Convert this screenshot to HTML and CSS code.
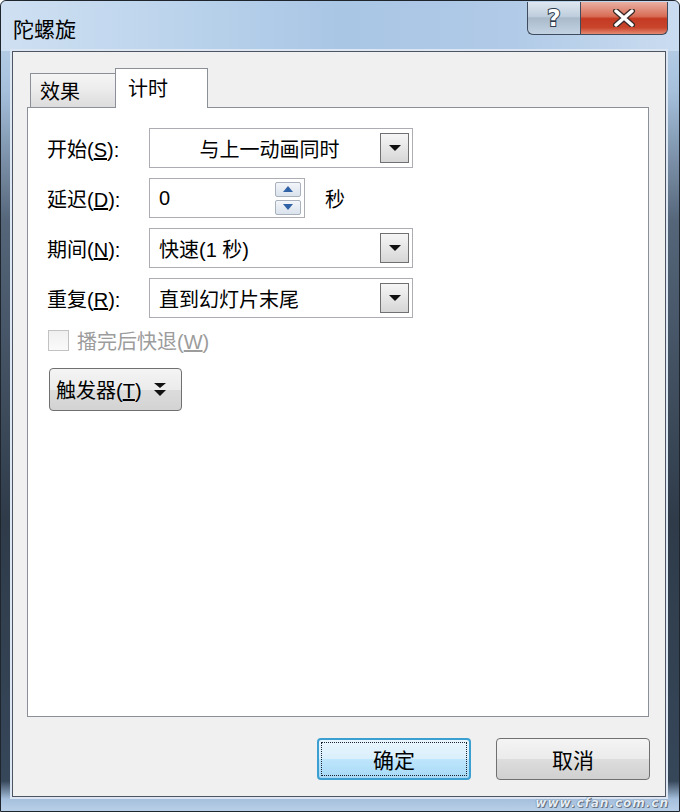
FILE: index.html
```html
<!DOCTYPE html>
<html lang="zh-CN">
<head>
    <meta charset="UTF-8">
    <meta name="viewport" content="width=device-width, initial-scale=1.0">
    <title>陀螺旋</title>
    <link rel="stylesheet" href="styles.css">
</head>
<body>
    <div class="window">
        <div class="titlebar">
            <span class="title">陀螺旋</span>
            <div class="caption">
                <button class="cap help">?</button>
                <button class="cap close">
                    <svg width="24" height="18" viewBox="0 0 24 18">
                        <path d="M4 2 L20 16 M20 2 L4 16" stroke="#3a2a28" stroke-width="6" stroke-linecap="round"/>
                        <path d="M4 2 L20 16 M20 2 L4 16" stroke="#fff" stroke-width="3.4" stroke-linecap="round"/>
                    </svg>
                </button>
            </div>
        </div>

        <div class="client">
            <div class="tabs">
                <div class="tab">效果</div>
                <div class="tab active">计时</div>
            </div>

            <div class="panel">
                <div class="row">
                    <label class="lbl">开始(<u>S</u>):</label>
                    <div class="combo center">
                        <span class="value">与上一动画同时</span>
                        <span class="drop"></span>
                    </div>
                </div>
                <div class="row">
                    <label class="lbl">延迟(<u>D</u>):</label>
                    <div class="spinbox">
                        <span class="value">0</span>
                        <div class="spin">
                            <span class="spin-btn">
                                <svg width="10" height="6" viewBox="0 0 10 6"><polygon points="0,6 10,6 5,0" fill="#2f63a6"/></svg>
                            </span>
                            <span class="spin-btn">
                                <svg width="10" height="6" viewBox="0 0 10 6"><polygon points="0,0 10,0 5,6" fill="#2f63a6"/></svg>
                            </span>
                        </div>
                    </div>
                    <span class="unit">秒</span>
                </div>
                <div class="row">
                    <label class="lbl">期间(<u>N</u>):</label>
                    <div class="combo">
                        <span class="value">快速(1 秒)</span>
                        <span class="drop"></span>
                    </div>
                </div>
                <div class="row">
                    <label class="lbl">重复(<u>R</u>):</label>
                    <div class="combo">
                        <span class="value">直到幻灯片末尾</span>
                        <span class="drop"></span>
                    </div>
                </div>

                <div class="check-row">
                    <span class="checkbox"></span>
                    <span class="check-text">播完后快退(<u>W</u>)</span>
                </div>

                <button class="trigger">
                    <span>触发器(<u>T</u>)</span>
                    <svg width="12" height="15" viewBox="0 0 12 15">
                        <polygon points="0,1 12,1 6,6" fill="#111"/>
                        <polygon points="0,8 12,8 6,14" fill="#111"/>
                    </svg>
                </button>
            </div>

            <div class="actions">
                <button class="btn default"><span class="focus">确定</span></button>
                <button class="btn">取消</button>
            </div>
        </div>

        <span class="watermark">www.cfan.com.cn</span>
    </div>
</body>
</html>
```

FILE: styles.css
```css
* {
    box-sizing: border-box;
}
body {
    margin: 0;
    width: 680px;
    height: 812px;
    font-family: "Liberation Sans", "Noto Sans CJK SC", sans-serif;
    font-size: 20px;
    color: #000;
}
.window {
    position: relative;
    width: 680px;
    height: 812px;
    display: flex;
    flex-direction: column;
    padding: 0 13px 14px 11px;
    border: 1px solid #1e252d;
    border-radius: 6px 6px 0 0;
    background: linear-gradient(to bottom, #c2d7ee 0, #a6c0dc 90px, #55667a 220px, #2f3b49 520px, #36475a 780px, #a5bfdc 798px, #bcd2ea 812px);
}

/* title bar */
.titlebar {
    height: 50px;
    margin: 0 -13px 0 -11px;
    padding: 0 11px 0 12px;
    display: flex;
    align-items: flex-start;
    justify-content: space-between;
    border-radius: 6px 6px 0 0;
    background: linear-gradient(to right, #cfe0f2 0%, #bcd4ec 25%, #a9c6e5 50%, #b0cae7 75%, #cadcf0 100%);
}
.title {
    font-family: "Noto Sans CJK SC", sans-serif;
    font-size: 21px;
    line-height: 54px;
}
.caption {
    display: flex;
    margin-top: 1px;
}
.cap {
    height: 33px;
    border: 1px solid #3f4c5e;
    border-top: none;
    padding: 0;
    display: flex;
    align-items: center;
    justify-content: center;
}
.help {
    width: 53px;
    border-right: none;
    border-radius: 0 0 0 6px;
    background: linear-gradient(to bottom, #dfe7f0 0%, #bfcedd 45%, #a9bacb 50%, #c3d3e3 100%);
    font-family: "DejaVu Sans", sans-serif;
    font-weight: bold;
    font-size: 23px;
    color: #fff;
    -webkit-text-stroke: 2px #2c3a4c;
    paint-order: stroke fill;
}
.close {
    width: 88px;
    border-radius: 0 0 6px 0;
    background: linear-gradient(to bottom, #eab0a2 0%, #d86c55 45%, #c43a22 52%, #c8452c 80%, #e58a72 100%);
}

/* client area */
.client {
    flex: 1;
    display: flex;
    flex-direction: column;
    padding: 16px 16px 0 14px;
    background: #f0f0f0;
    border: 1px solid #4c5561;
    box-shadow: 0 0 0 2px #dbe6f2;
}
.tabs {
    display: flex;
    align-items: flex-end;
    height: 39px;
    padding-left: 3px;
    position: relative;
    z-index: 1;
}
.tab {
    width: 85px;
    height: 34px;
    border: 1px solid #8a8f98;
    border-bottom: none;
    border-right: none;
    background: linear-gradient(to bottom, #f5f5f5 0%, #ebebeb 50%, #dcdcdc 100%);
    font-family: "Noto Sans CJK SC", sans-serif;
    padding-left: 9px;
    line-height: 34px;
}
.tab.active {
    width: 93px;
    height: 40px;
    margin-bottom: -1px;
    border-right: 1px solid #8a8f98;
    background: #fff;
    padding-left: 12px;
    line-height: 37px;
}
.panel {
    flex: 1;
    display: flex;
    flex-direction: column;
    align-items: flex-start;
    gap: 10px;
    padding: 20px 0 0 19px;
    background: #fff;
    border: 1px solid #8a8f98;
}
.row {
    display: flex;
    align-items: center;
    height: 40px;
}
.lbl {
    width: 102px;
}
.combo, .spinbox {
    height: 40px;
    display: flex;
    align-items: center;
    background: #fff;
    border: 1px solid #abadb3;
    padding: 0 3px 0 9px;
}
.combo {
    width: 264px;
}
.value {
    flex: 1;
}
.combo.center .value {
    text-align: center;
}
.drop {
    width: 29px;
    height: 30px;
    border: 1px solid #707070;
    background: linear-gradient(to bottom, #f6f6f6 0%, #e6e6e6 50%, #d6d6d6 100%);
    display: flex;
    align-items: center;
    justify-content: center;
}
.drop::after {
    content: "";
    border-left: 6px solid transparent;
    border-right: 6px solid transparent;
    border-top: 6px solid #111;
}
.spinbox {
    width: 156px;
}
.spin {
    display: flex;
    flex-direction: column;
    gap: 3px;
}
.spin-btn {
    width: 26px;
    height: 15px;
    border: 1px solid #a9b1bc;
    border-radius: 2px;
    background: linear-gradient(to bottom, #f3f6fa, #dae2ec);
    display: flex;
    align-items: center;
    justify-content: center;
}
.unit {
    margin-left: 20px;
    font-family: "Noto Sans CJK SC", sans-serif;
}
.check-row {
    display: flex;
    align-items: center;
    gap: 8px;
    margin: 0 0 0 1px;
    height: 24px;
}
.checkbox {
    width: 21px;
    height: 21px;
    border: 1px solid #c2c2c2;
    background: linear-gradient(to bottom, #f0f0f0, #fafafa);
}
.check-text {
    color: #9c9c9c;
}
.trigger {
    margin: 6px 0 0 2px;
    width: 133px;
    height: 43px;
    display: flex;
    align-items: center;
    gap: 12px;
    padding: 0 0 0 6px;
    font: inherit;
    color: #000;
    border: 1px solid #707070;
    border-radius: 4px;
    background: linear-gradient(to bottom, #f4f4f4 0%, #ebebeb 50%, #dcdcdc 51%, #d3d3d3 100%);
}

/* dialog buttons */
.actions {
    display: flex;
    justify-content: flex-end;
    gap: 25px;
    padding: 21px 0 16px;
    margin-right: -1px;
}
.btn {
    width: 154px;
    height: 42px;
    font-family: "Noto Sans CJK SC", sans-serif;
    font-size: 21px;
    color: #000;
    border: 1px solid #707070;
    border-radius: 4px;
    background: linear-gradient(to bottom, #f4f4f4 0%, #ebebeb 50%, #dddddd 51%, #d0d0d0 100%);
    padding: 0;
}
.btn.default {
    border: 2px solid #3c9fd1;
    padding: 2px;
    background: linear-gradient(to bottom, #eaf6fd 0%, #d9effc 50%, #bee6fd 51%, #a7d9f5 100%);
}
.focus {
    display: flex;
    align-items: center;
    justify-content: center;
    height: 100%;
    border: 1px dotted #1b2430;
}
.watermark {
    position: absolute;
    right: 10px;
    bottom: 1px;
    font-family: "DejaVu Sans", sans-serif;
    font-size: 12px;
    font-style: italic;
    font-weight: bold;
    letter-spacing: 1px;
    color: #e6edf5;
    text-shadow: 0 0 1px #3a4656, 1px 1px 0 #6b7888;
}
```
